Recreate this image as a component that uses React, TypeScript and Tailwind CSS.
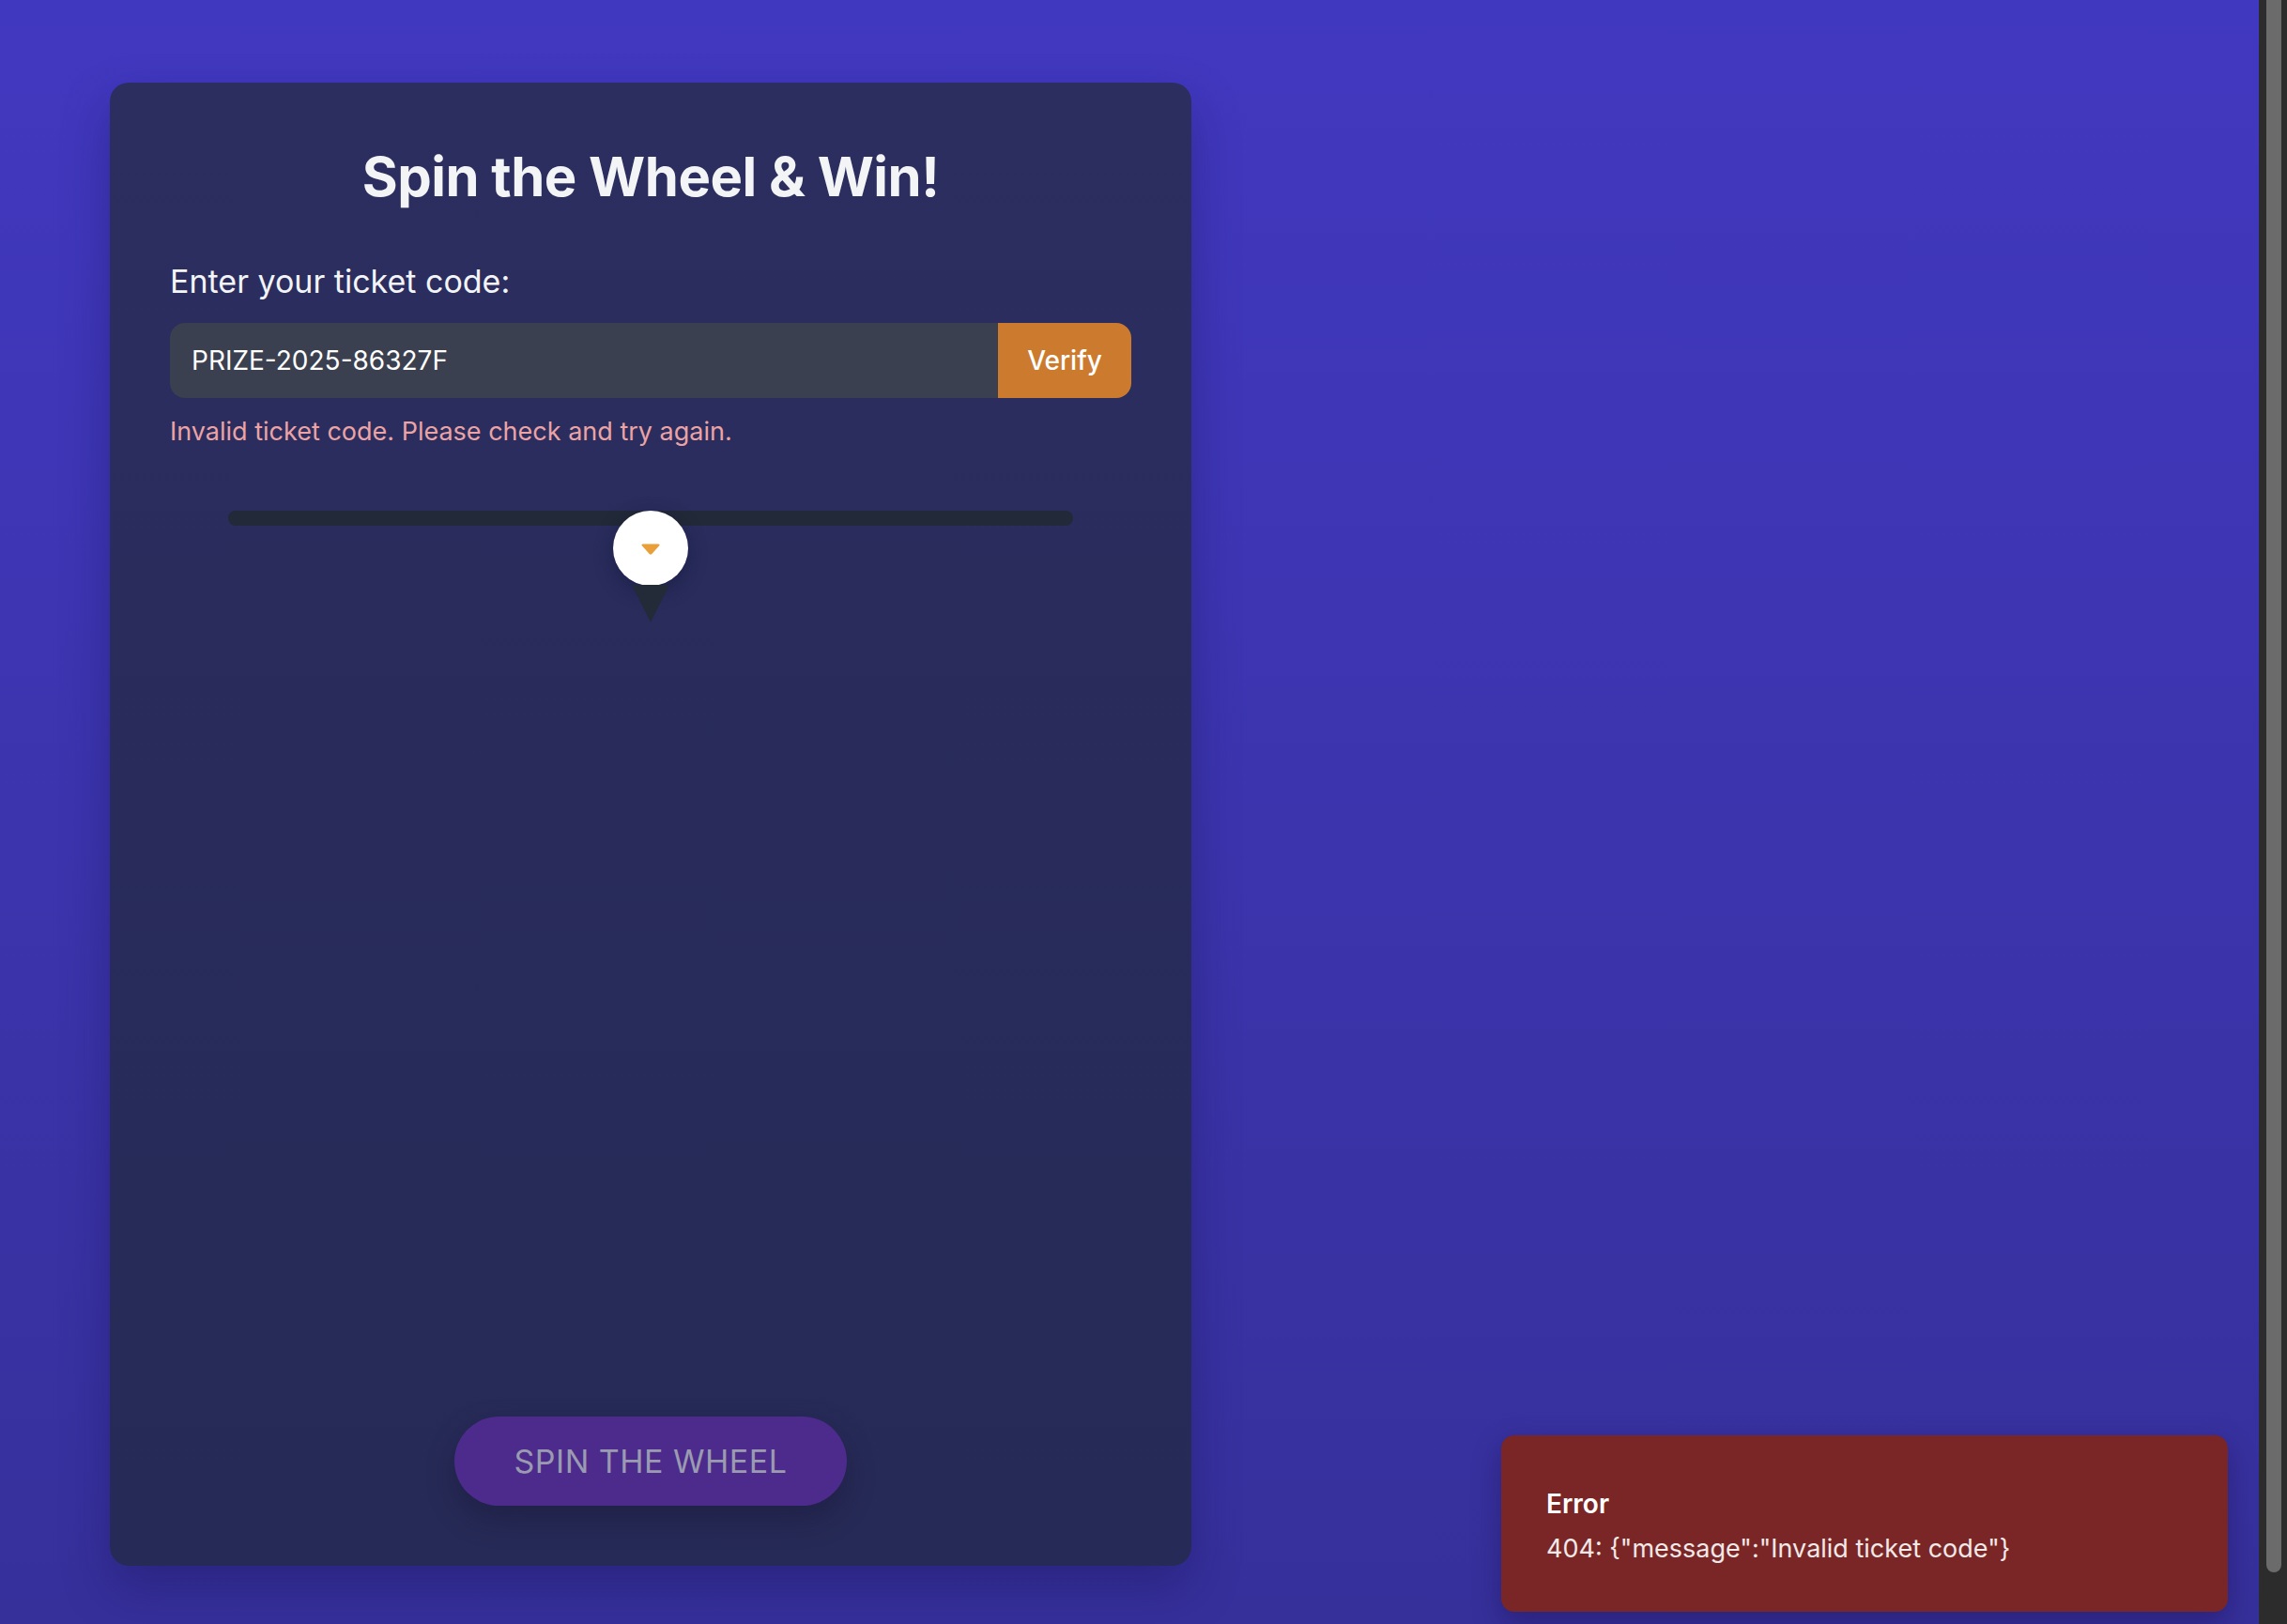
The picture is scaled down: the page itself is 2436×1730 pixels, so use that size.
import React from 'react';

const ticketCode = 'PRIZE-2025-86327F';

function Pointer() {
  return (
    <div className="absolute left-1/2 top-0 flex -translate-x-1/2 flex-col items-center">
      <div className="flex h-[80px] w-[80px] items-center justify-center rounded-full bg-white shadow-[0_6px_20px_rgba(15,18,50,0.45)]">
        <svg width="22" height="14" viewBox="0 0 22 14" className="mt-[2px]">
          <path
            d="M3 1.5 H19 Q21.5 1.5 20 3.5 L12.4 12 Q11 13.6 9.6 12 L2 3.5 Q0.5 1.5 3 1.5 Z"
            fill="#e99f3a"
          />
        </svg>
      </div>
      <svg width="40" height="40" viewBox="0 0 40 40" className="-mt-[1px]">
        <path d="M0 0 H40 L20 40 Z" fill="#232a38" />
      </svg>
    </div>
  );
}

export default function App() {
  return (
    <div
      className="flex h-[1730px] w-full overflow-hidden"
      style={{ fontFamily: 'Inter, "Noto Sans", sans-serif' }}
    >
      <main className="relative flex-1 bg-gradient-to-b from-[#4138c0] to-[#36309b] pl-[117px] pt-[88px]">
        <section
          className={`flex h-[1580px] w-[1152px] flex-col rounded-[20px] bg-gradient-to-b
            from-[#2b2e5f] to-[#262a56] p-[64px] shadow-[0_24px_50px_rgba(20,16,80,0.35)]
          `}
        >
          <h1 className="text-center text-[58px] font-bold leading-[72px] tracking-[-0.5px] text-[#f3f4f6]">
            Spin the Wheel &amp; Win!
          </h1>

          <label className="mt-[48px] text-[34px] leading-[56px] text-[#f3f4f6]">
            Enter your ticket code:
          </label>

          <div className="mt-[16px] flex h-[80px]">
            <div className="flex flex-1 items-center rounded-l-[16px] bg-[#3a4050] px-[23px] text-[28px] text-white">
              {ticketCode}
            </div>
            <button className="flex w-[142px] items-center justify-center rounded-r-[16px] bg-[#cc7b2e] text-[28px] font-medium text-white">
              Verify
            </button>
          </div>

          <p className="mt-[16px] text-[27px] leading-[40px] text-[#eba3a6]">
            Invalid ticket code. Please check and try again.
          </p>

          <div className="relative mx-auto mt-[64px] h-[16px] w-[900px] rounded-full bg-[#222938]">
            <Pointer />
          </div>

          <div className="flex-1" />

          <div className="flex justify-center">
            <button
              className={`h-[95px] w-[418px] rounded-full bg-[#4d2b8c] text-[34px] uppercase tracking-[0.5px]
                text-[#9a9bb0] shadow-[0_14px_30px_rgba(20,18,45,0.35)]
              `}
            >
              Spin the Wheel
            </button>
          </div>
        </section>

        <div
          className={`absolute bottom-[13px] right-[33px] flex w-[774px] flex-col gap-[8px] rounded-[14px]
            bg-[#7a2626] px-[48px] pb-[47px] pt-[53px] shadow-[0_12px_30px_rgba(20,10,60,0.35)]
          `}
        >
          <div className="text-[28px] font-semibold leading-[40px] text-white">Error</div>
          <div className="text-[27px] leading-[40px] text-white/90">
            404: {'{"message":"Invalid ticket code"}'}
          </div>
        </div>
      </main>

      <aside className="w-[30px] bg-[#2c2c2c] pl-[8px] pr-[6px]">
        <div className="h-[1675px] w-[16px] rounded-b-[8px] bg-[#6b6b6b]" />
      </aside>
    </div>
  );
}
